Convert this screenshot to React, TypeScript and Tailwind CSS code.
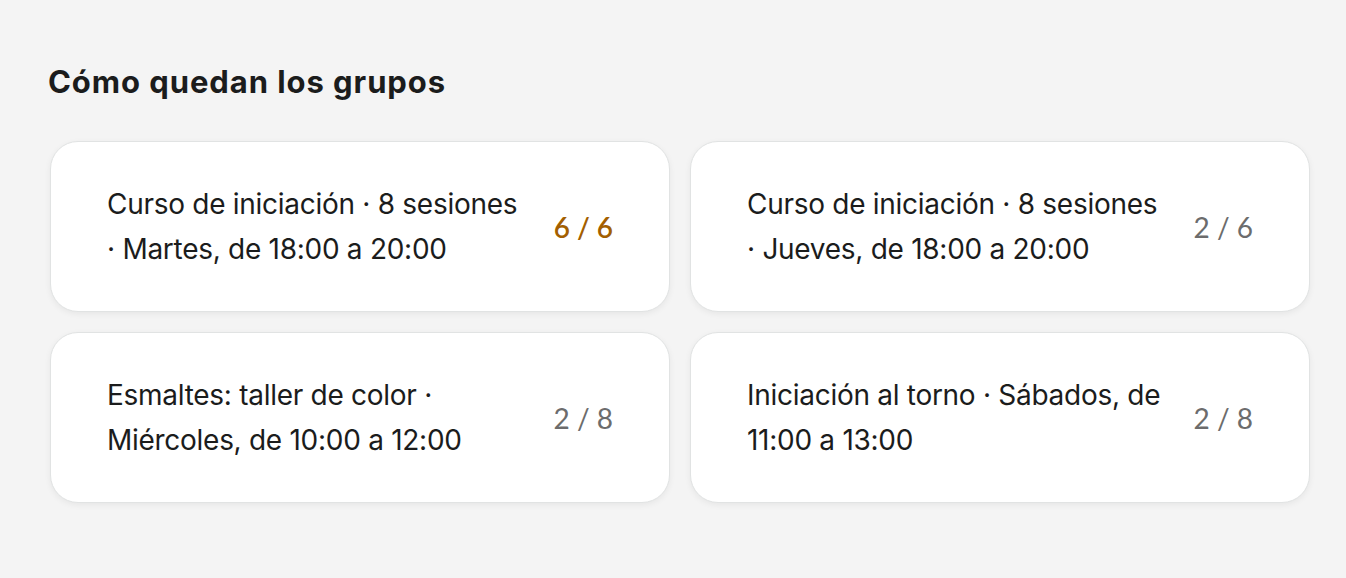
import React from "react";

const groups = [
  { title: "Curso de iniciación · 8 sesiones · Martes, de 18:00 a 20:00", count: "6 / 6", full: true },
  { title: "Curso de iniciación · 8 sesiones · Jueves, de 18:00 a 20:00", count: "2 / 6", full: false },
  { title: "Esmaltes: taller de color · Miércoles, de 10:00 a 12:00", count: "2 / 8", full: false },
  { title: "Iniciación al torno · Sábados, de 11:00 a 13:00", count: "2 / 8", full: false },
];

export default function App() {
  return (
    <div className="min-h-[578px] w-full bg-[#f4f4f4] pl-[48px] pr-[36px] pt-[61px] font-['Inter',sans-serif] text-[#1b1c1c]">
      <h2 className="mb-[38px] text-[31px] font-bold leading-[42px] tracking-[0.03em]">Cómo quedan los grupos</h2>

      <div className="ml-[2px] grid grid-cols-2 gap-x-[20px] gap-y-[20px]">
        {groups.map((g) => (
          <div
            key={g.title}
            className="flex h-[171px] items-center justify-between gap-[16px] rounded-[28px] border border-[#e1e3e3] bg-white pl-[56px] pr-[56px] shadow-[0_2px_6px_rgba(0,0,0,0.06)]"
          >
            <p className="max-w-[418px] text-[28px] leading-[45px] tracking-[-0.01em] font-normal">{g.title}</p>
            <span
              className={
                g.full
                  ? "shrink-0 text-[28px] font-semibold text-[#a35f00] font-['Lato',sans-serif]"
                  : "shrink-0 text-[28px] font-normal text-[#6c6c6c] font-['Lato',sans-serif]"
              }
            >
              {g.count}
            </span>
          </div>
        ))}
      </div>
    </div>
  );
}
